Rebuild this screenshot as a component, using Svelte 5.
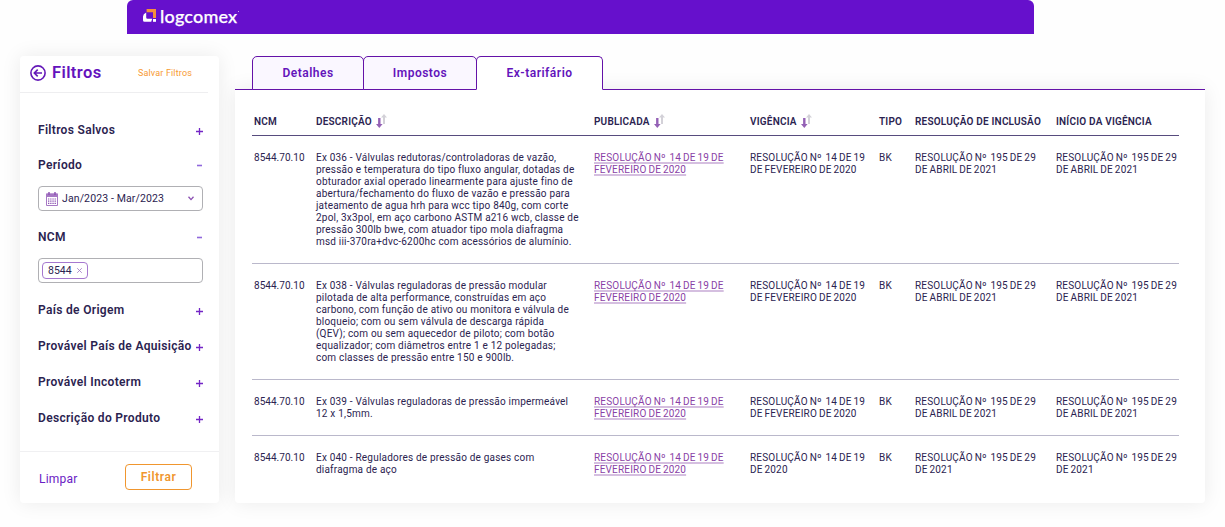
<script lang="ts">
  interface Row {
    ncm: string;
    descricao: string[];
    publicada: string[];
    vigencia: string[];
    inclusao: string[];
  }

  const tabs = ['Detalhes', 'Impostos', 'Ex-tarifário'];
  let activeTab = $state('Ex-tarifário');

  const columns = [
    { label: 'NCM', sort: false },
    { label: 'DESCRIÇÃO', sort: true },
    { label: 'PUBLICADA', sort: true },
    { label: 'VIGÊNCIA', sort: true },
    { label: 'TIPO', sort: false },
    { label: 'RESOLUÇÃO DE INCLUSÃO', sort: false },
    { label: 'INÍCIO DA VIGÊNCIA', sort: false }
  ];

  const publicada = ['RESOLUÇÃO Nº  14 DE 19 DE', 'FEVEREIRO DE 2020'];
  const vigencia = ['RESOLUÇÃO Nº  14 DE 19', 'DE FEVEREIRO DE 2020'];
  const inclusao = ['RESOLUÇÃO Nº  195 DE 29', 'DE ABRIL DE 2021'];

  const rows: Row[] = [
    {
      ncm: '8544.70.10',
      descricao: [
        'Ex 036 - Válvulas redutoras/controladoras de vazão,',
        'pressão e temperatura do tipo fluxo angular, dotadas de',
        'obturador axial operado linearmente para ajuste fino de',
        'abertura/fechamento do fluxo de vazão e pressão para',
        'jateamento de agua hrh para wcc tipo 840g, com corte',
        '2pol, 3x3pol, em aço carbono ASTM a216 wcb, classe de',
        'pressão 300lb bwe, com atuador tipo mola diafragma',
        'msd iii-370ra+dvc-6200hc com acessórios de alumínio.'
      ],
      publicada,
      vigencia,
      inclusao
    },
    {
      ncm: '8544.70.10',
      descricao: [
        'Ex 038 - Válvulas reguladoras de pressão modular',
        'pilotada de alta performance, construídas em aço',
        'carbono, com função de ativo ou monitora e válvula de',
        'bloqueio; com ou sem válvula de descarga rápida',
        '(QEV); com ou sem aquecedor de piloto; com botão',
        'equalizador; com diâmetros entre 1 e 12 polegadas;',
        'com classes de pressão entre 150 e 900lb.'
      ],
      publicada,
      vigencia,
      inclusao
    },
    {
      ncm: '8544.70.10',
      descricao: ['Ex 039 - Válvulas reguladoras de pressão impermeável', '12 x 1,5mm.'],
      publicada,
      vigencia,
      inclusao
    },
    {
      ncm: '8544.70.10',
      descricao: ['Ex 040 - Reguladores de pressão de gases com', 'diafragma de aço'],
      publicada,
      vigencia: ['RESOLUÇÃO Nº  14 DE 19', 'DE 2020'],
      inclusao: ['RESOLUÇÃO Nº  195 DE 29', 'DE 2021']
    }
  ];
</script>

{#snippet toggle(open: boolean)}
  <svg class="toggle" class:open width="7" height="7" viewBox="0 0 7 7">
    <path d={open ? 'M1 3.5H6' : 'M0 3.5H7M3.5 0V7'} />
  </svg>
{/snippet}

{#snippet filterRow(label: string, open: boolean)}
  <div class="filter-row">
    <span>{label}</span>
    {@render toggle(open)}
  </div>
{/snippet}

<header class="topbar">
  <svg class="logo-mark" width="14" height="14" viewBox="0 0 14 14">
    <path d="M3.6 0H13V9H10V3.2H3.6Z" fill="#f58f3c" />
    <path d="M3.2 3.4V8.4Q3.2 9.8 4.6 9.8H9.2L8.2 12.8H1.5Q0 12.8 0 11.3V7.6Q0 5 3.2 3.4Z" fill="#fff" />
    <path d="M10 10H13V12.8H10Z" fill="#fff" />
  </svg>
  <span class="logo-name">logcomex</span>
  <span class="logo-dot"></span>
</header>

<div class="page">
  <aside class="filters">
    <div class="filters-head">
      <svg width="16" height="16" viewBox="0 0 16 16" class="back">
        <circle cx="8" cy="8" r="7.1" />
        <path d="M12 8H4.5M7.7 4.6L4.3 8L7.7 11.4" />
      </svg>
      <h2>Filtros</h2>
      <button class="save">Salvar Filtros</button>
    </div>

    <div class="filters-body">
      {@render filterRow('Filtros Salvos', false)}
      {@render filterRow('Período', true)}
      <div class="field period">
        <svg width="12" height="14" viewBox="0 0 12 14" class="calendar">
          <path d="M.5 2H11.5V13.5H.5Z" fill="none" stroke="#a678c4" />
          <path d="M0 1.6H12V5H0Z" fill="#a678c4" />
          <path d="M3 0V3M9 0V3" stroke="#8b50b2" stroke-width="1.4" />
          <path d="M2 7H10M2 9.2H10M2 11.4H10" stroke="#8b50b2" stroke-width="1.2" stroke-dasharray="1.3 .9" />
        </svg>
        <span class="period-text">Jan/2023 - Mar/2023</span>
        <svg width="6" height="5" viewBox="0 0 6 5" class="chevron">
          <path d="M.5 .8L3 3.6L5.5 .8" />
        </svg>
      </div>
      {@render filterRow('NCM', true)}
      <div class="field ncm">
        <span class="chip">
          8544
          <svg width="5" height="5" viewBox="0 0 5 5"><path d="M.2 .2L4.8 4.8M4.8 .2L.2 4.8" /></svg>
        </span>
      </div>
      {@render filterRow('País de Origem', false)}
      {@render filterRow('Provável País de Aquisição', false)}
      {@render filterRow('Provável Incoterm', false)}
      {@render filterRow('Descrição do Produto', false)}
    </div>

    <div class="filters-foot">
      <button class="clear">Limpar</button>
      <button class="apply">Filtrar</button>
    </div>
  </aside>

  <main class="content">
    <nav class="tabs">
      {#each tabs as tab}
        <button class="tab" class:active={tab === activeTab} onclick={() => (activeTab = tab)}>{tab}</button>
      {/each}
    </nav>

    <section class="panel">
      <div class="row head">
        {#each columns as col}
          <div class="cell">
            {col.label}
            {#if col.sort}
              <svg width="11" height="14" viewBox="0 0 11 14" class="sort">
                <path d="M7 10V3.6H5L8 0L11 3.6H9V10Z" fill="#d3d1d8" />
                <path d="M2.1 4H4.5V10H6.6L3.3 14L0 10H2.1Z" fill="#9461b5" />
              </svg>
            {/if}
          </div>
        {/each}
      </div>
      {#each rows as row}
        <div class="row">
          <div class="cell code">{row.ncm}</div>
          <div class="cell desc">{row.descricao.join('\n')}</div>
          <div class="cell"><a href="#resolucao">{row.publicada.join('\n')}</a></div>
          <div class="cell">{row.vigencia.join('\n')}</div>
          <div class="cell">BK</div>
          <div class="cell">{row.inclusao.join('\n')}</div>
          <div class="cell">{row.inclusao.join('\n')}</div>
        </div>
      {/each}
    </section>
  </main>
</div>

<style>
  :global(body) {
    background: #fefefe;
    font-family: Roboto, 'Liberation Sans', sans-serif;
    color: #2b2350;
  }

  button {
    font-family: inherit;
    background: none;
    border: none;
    padding: 0;
    cursor: pointer;
  }

  .topbar {
    box-sizing: border-box;
    height: 34px;
    margin: 0 191px 0 127px;
    padding: 0 16px 2px;
    background: #6610cc;
    border-radius: 6px 6px 0 0;
    display: flex;
    align-items: center;
  }

  .logo-name {
    margin: -1px 0 0 3px;
    font-family: Lato, sans-serif;
    font-size: 18px;
    font-weight: 500;
    line-height: 20px;
    letter-spacing: 0.2px;
    color: #fff;
    -webkit-text-stroke: 0.25px #fff;
  }

  .logo-dot {
    width: 1px;
    height: 1px;
    margin: 0 0 9px 1px;
    background: #c9a9ec;
  }

  .page {
    box-sizing: border-box;
    height: 493px;
    overflow: hidden;
    display: flex;
    align-items: flex-start;
    gap: 16px;
    padding: 22px 0 0 20px;
  }

  .filters {
    width: 199px;
    height: 447px;
    flex: none;
    display: flex;
    flex-direction: column;
    background: #fff;
    border-radius: 4px;
    box-shadow: 0 0 20px rgba(0, 0, 0, 0.08);
  }

  .filters-head {
    box-sizing: border-box;
    height: 37px;
    width: 188px;
    padding: 0 16px 3px 10px;
    display: flex;
    align-items: center;
    border-bottom: 1px solid #eeeef0;
  }

  .back {
    fill: none;
    stroke: #6418b8;
    stroke-width: 1.6;
  }

  h2 {
    margin: 0 0 0 6px;
    font-size: 16.5px;
    font-weight: 600;
    letter-spacing: 0.4px;
    color: #6412bd;
  }

  .save {
    margin-left: auto;
    font-size: 9px;
    letter-spacing: 0.15px;
    color: #f79a32;
  }

  .filters-body {
    flex: 1;
    padding: 25px 16px 0 18px;
  }

  .filter-row {
    height: 24px;
    margin-bottom: 12px;
    display: flex;
    align-items: center;
    justify-content: space-between;
    font-size: 12px;
    font-weight: 600;
    letter-spacing: 0.32px;
    white-space: nowrap;
  }

  .filter-row:first-child {
    margin-bottom: 11px;
  }

  .toggle {
    margin-top: 2px;
    fill: none;
    stroke: #7426c6;
    stroke-width: 1.3;
  }

  .toggle.open {
    margin-top: 0;
    stroke: #9068dc;
    stroke-width: 1.6;
  }

  .field {
    box-sizing: border-box;
    height: 25px;
    margin: -3px 0 14px;
    border: 1px solid #b0b0b4;
    border-radius: 4px;
    display: flex;
    align-items: center;
  }

  .period {
    padding: 0 8px 0 7px;
  }

  .period-text {
    flex: 1;
    margin-left: 4px;
    font-size: 10.5px;
    letter-spacing: 0.12px;
  }

  .chevron {
    fill: none;
    stroke: #8b50b2;
    stroke-width: 1.3;
  }

  .ncm {
    margin-bottom: 15px;
    padding-left: 3px;
  }

  .chip {
    box-sizing: border-box;
    height: 17px;
    width: 46px;
    padding: 0 5px;
    display: flex;
    align-items: center;
    justify-content: space-between;
    border: 1px solid #a678cf;
    border-radius: 4px;
    font-size: 10.5px;
  }

  .chip svg {
    stroke: #9c74c0;
    stroke-width: 0.8;
  }

  .filters-foot {
    height: 51px;
    padding: 0 27px 0 19px;
    border-top: 1px solid #f0f0f2;
    display: flex;
    align-items: center;
    justify-content: space-between;
  }

  .clear {
    margin-top: 2px;
    font-size: 12px;
    letter-spacing: 0.2px;
    color: #6a20c4;
  }

  .apply {
    width: 67px;
    height: 26px;
    margin-top: -1px;
    border: 1px solid #f0962e;
    border-radius: 4px;
    font-size: 12px;
    font-weight: 600;
    letter-spacing: 0.55px;
    color: #f0962e;
  }

  .content {
    width: 970px;
    flex: none;
  }

  .tabs {
    position: relative;
    display: flex;
    padding-left: 17px;
    margin-bottom: -1px;
  }

  .tab {
    box-sizing: border-box;
    width: 112px;
    height: 34px;
    border: 1px solid #6412a8;
    border-radius: 5px 5px 0 0;
    background: #faf7ff;
    font-size: 12px;
    font-weight: 600;
    letter-spacing: 0.5px;
    color: #6314bb;
  }

  .tab + .tab {
    width: 114px;
    margin-left: -1px;
  }

  .tab + .tab.active {
    width: 127px;
  }

  .tab.active {
    background: #fff;
    border-bottom-color: #fff;
  }

  .panel {
    box-sizing: border-box;
    height: 414px;
    padding: 17px 26px 0 17px;
    background: #fff;
    border-top: 1px solid #6412a8;
    border-radius: 0 0 4px 4px;
    box-shadow: 0 0 20px rgba(0, 0, 0, 0.08);
  }

  .row {
    display: grid;
    grid-template-columns: 62px 278px 156px 129px 36px 141px 1fr;
    padding: 16px 0 15px 2px;
    border-bottom: 1px solid #bab8cb;
    font-size: 10px;
    line-height: 12px;
  }

  .row:last-child {
    border-bottom: none;
  }

  .row.head {
    height: 28px;
    padding: 0 0 0 2px;
    border-bottom-color: #574c7e;
    font-weight: 600;
  }

  .cell {
    white-space: pre;
    letter-spacing: 0.18px;
    word-spacing: -0.75px;
  }

  .head .cell {
    display: flex;
    align-items: center;
    height: 30px;
    letter-spacing: 0.2px;
    word-spacing: 0;
    white-space: nowrap;
  }

  .cell.code {
    letter-spacing: 0.03px;
  }

  .cell.desc {
    letter-spacing: 0.2px;
    word-spacing: 0;
  }

  .sort {
    margin: -2px 0 0 4px;
  }

  a {
    color: #8a3fa6;
    text-decoration: underline;
    text-decoration-color: #d5bfe0;
    text-decoration-thickness: 2px;
    text-decoration-skip-ink: none;
    text-underline-offset: 0.5px;
  }
</style>
